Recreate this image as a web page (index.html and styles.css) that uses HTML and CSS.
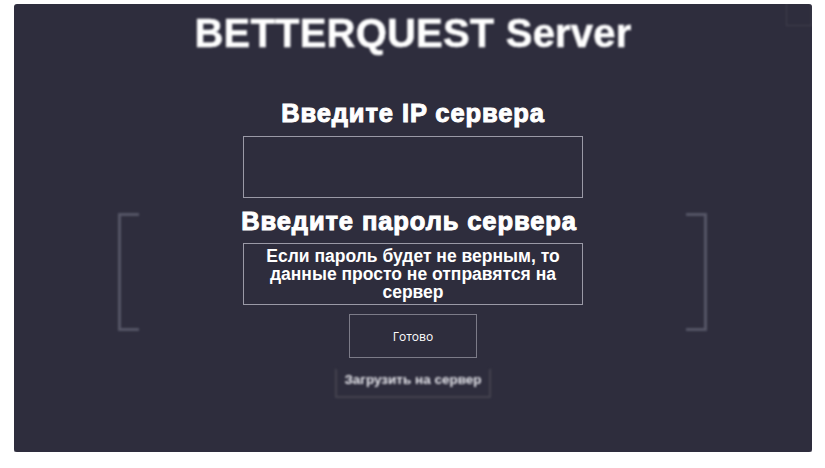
FILE: index.html
```html
<!DOCTYPE html>
<html lang="ru">
<head>
<meta charset="utf-8">
<title>BETTERQUEST Server</title>
<link rel="stylesheet" href="styles.css">
</head>
<body>
<div class="panel">
  <div class="corner"></div>
  <div class="bracket bracket-left"></div>
  <div class="bracket bracket-right"></div>
  <h1 class="title">BETTERQUEST Server</h1>
  <div class="form">
    <h2 class="label">Введите IP сервера</h2>
    <div class="field"></div>
    <h2 class="label label-pass">Введите пароль сервера</h2>
    <div class="field field-note">Если пароль будет не верным, то данные просто не отправятся на сервер</div>
    <button class="btn">Готово</button>
    <button class="btn-upload">Загрузить на сервер</button>
  </div>
</div>
</body>
</html>
```
FILE: styles.css
```css
html, body {
  margin: 0;
  padding: 0;
  background: #ffffff;
}
body {
  font-family: "Liberation Sans", Arial, sans-serif;
}
.panel {
  position: relative;
  margin: 4px 13px 0 14px;
  height: 448px;
  background: #2e2d3d;
  border-radius: 3px;
  box-shadow: 0 1px 0 #a0a0a8;
  display: flex;
  flex-direction: column;
  align-items: center;
  overflow: hidden;
}
.title {
  margin: 6px 0 0;
  font-size: 40px;
  line-height: 46px;
  font-weight: 700;
  color: #ffffff;
  filter: blur(1.3px);
  -webkit-text-stroke: 0.5px #ffffff;
  letter-spacing: 0.2px;
}
.form {
  margin-top: 42px;
  display: flex;
  flex-direction: column;
  align-items: center;
}
.label {
  margin: 0;
  font-size: 25.5px;
  line-height: 30px;
  font-weight: 700;
  color: #ffffff;
  -webkit-text-stroke: 1px #ffffff;
  letter-spacing: 0.9px;
}
.field {
  box-sizing: border-box;
  width: 340px;
  height: 62px;
  border: 1px solid #9a99a6;
  margin-top: 8px;
}
.label-pass {
  margin-top: 8px;
  padding-right: 8px;
}
.field-note {
  margin-top: 7px;
  color: #ffffff;
  font-size: 17.5px;
  line-height: 18px;
  font-weight: 700;
  text-align: center;
  display: flex;
  align-items: center;
  justify-content: center;
  padding: 0 14px;
}
.btn {
  margin-top: 9px;
  width: 128px;
  height: 44px;
  box-sizing: border-box;
  background: transparent;
  border: 1px solid #7c7b88;
  color: #ffffff;
  font-family: "Open Sans", "DejaVu Sans", sans-serif;
  font-size: 12px;
  padding: 0;
}
.btn-upload {
  margin-top: 10px;
  width: 156px;
  height: 30px;
  box-sizing: border-box;
  background: transparent;
  border: 2px solid #44434f;
  border-top-color: transparent;
  color: #e4e4ea;
  font-family: "Liberation Sans", Arial, sans-serif;
  font-weight: 700;
  font-size: 13.5px;
  padding: 0 0 7px;
  filter: blur(1.3px);
}
.bracket {
  position: absolute;
  top: 209px;
  width: 18px;
  height: 112px;
  border: 3px solid #555566;
  filter: blur(0.8px);
}
.bracket-left {
  left: 104px;
  border-right: none;
}
.bracket-right {
  left: 672px;
  border-left: none;
}
.corner {
  position: absolute;
  top: -2px;
  right: 0;
  width: 24px;
  height: 22px;
  border: 1px solid #41404e;
  filter: blur(1px);
}
```
